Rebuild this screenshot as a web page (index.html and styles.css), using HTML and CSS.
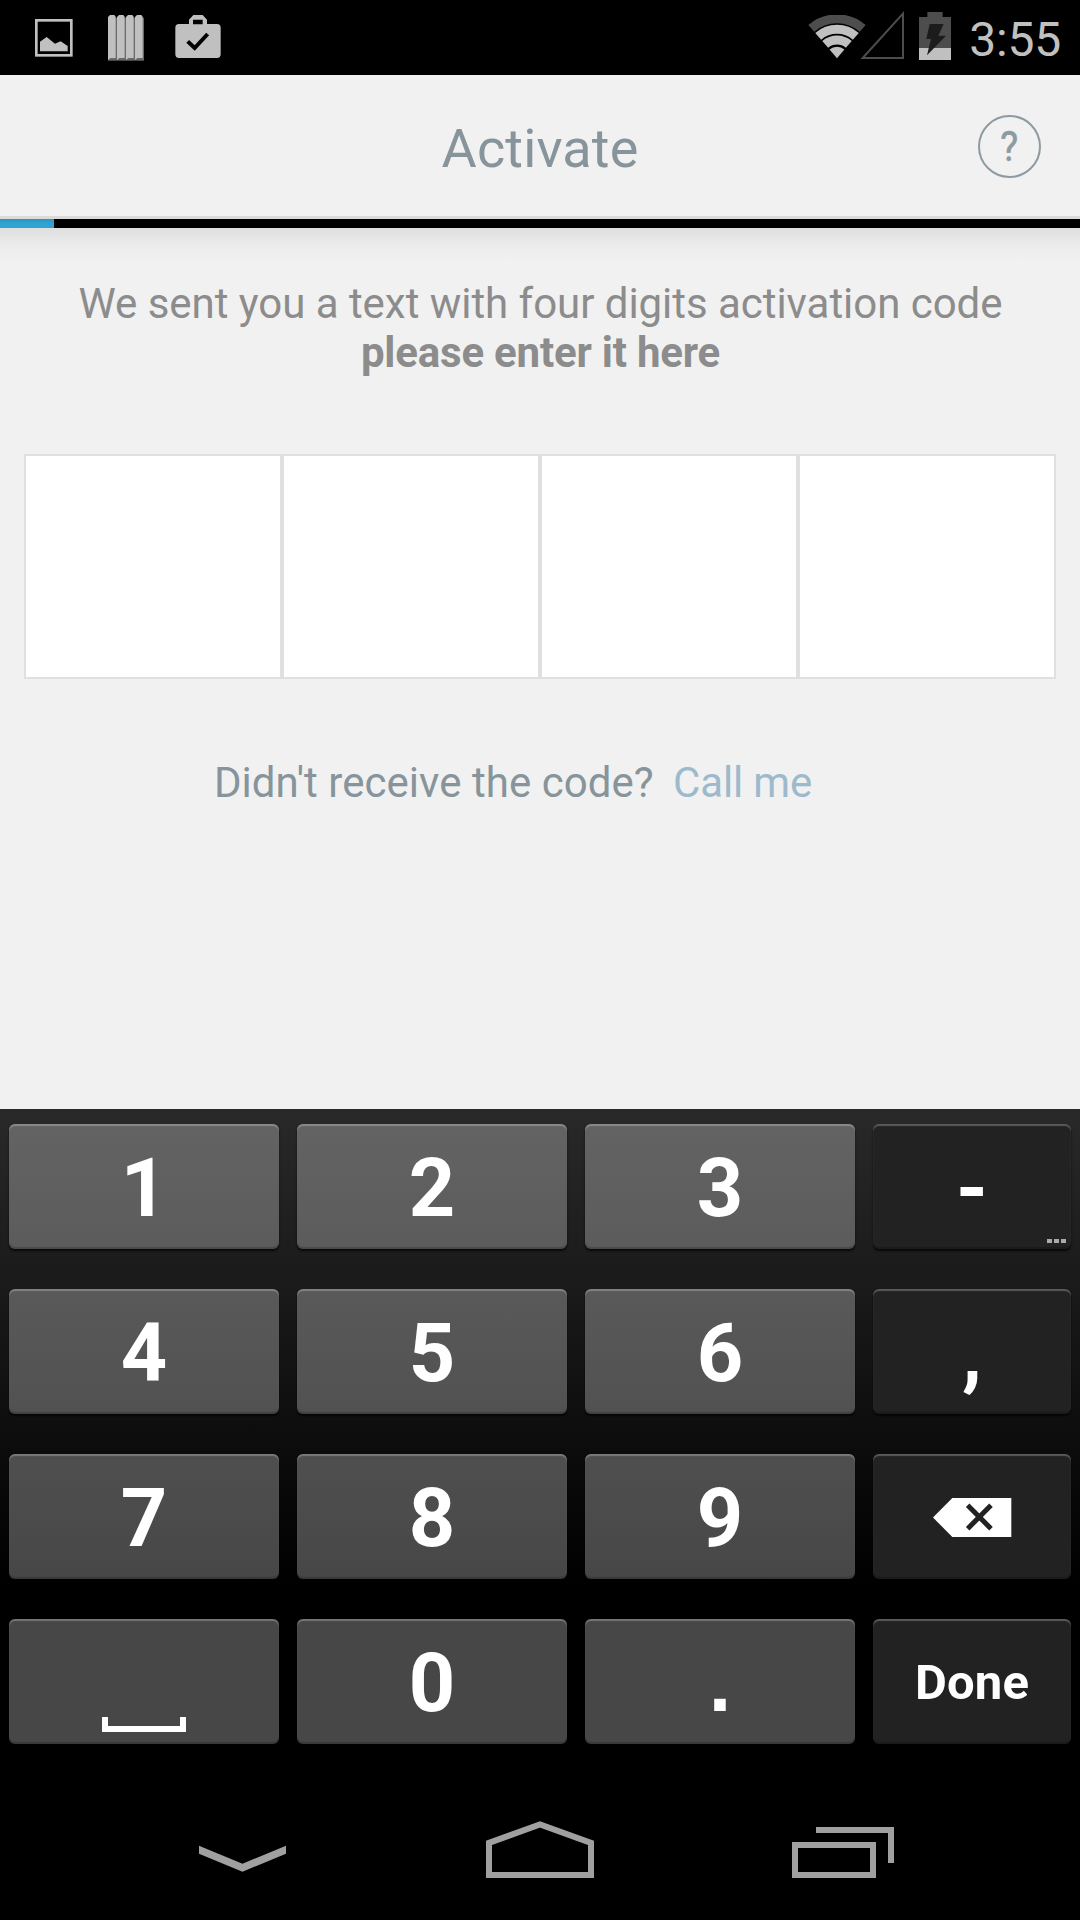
FILE: index.html
```html
<!DOCTYPE html>
<html lang="en">
<head>
<meta charset="utf-8">
<title>Activate</title>
<link rel="stylesheet" href="styles.css">
</head>
<body>
<div class="screen">
  <div class="status-bar">
    <div class="notifications">
      <svg class="icon-image" width="38" height="38" viewBox="0 0 114 114"><rect x="4" y="4" width="105" height="105" fill="none" stroke="#c0c0c0" stroke-width="8"/><path d="M15 68 35 54 60 74 77 67 98 81V97H15Z" fill="#c0c0c0"/></svg>
      <svg class="icon-books" width="36" height="46" viewBox="0 0 108 138">
        <g fill="#6a6a6a"><rect y="8" width="27" height="129"/><rect x="27" y="8" width="27" height="129"/><rect x="54" y="8" width="27" height="129"/><rect x="81" y="8" width="27" height="129"/></g>
        <g fill="#c0c0c0"><path d="M0 6 6 0H19L23 5V129H7L0 135Z"/><path d="M27 6 33 0H46L50 5V129H34L27 135Z"/><path d="M54 6 60 0H73L77 5V129H61L54 135Z"/><path d="M81 6 87 0H100L104 5V129H88L81 135Z"/></g>
      </svg>
      <svg class="icon-bag" width="46" height="43" viewBox="0 0 138 129"><path fill="#c0c0c0" fill-rule="evenodd" d="M12 27H42V14L55 0H83L96 14V27H126Q137 27 137 38V118Q137 129 126 129H12Q1 129 1 118V38Q1 27 12 27ZM54 14V28H83V14Z"/><path d="M38 79 59 99 98 57" fill="none" stroke="#000" stroke-width="12"/></svg>
    </div>
    <div class="system">
      <svg class="icon-wifi" width="58" height="44" viewBox="83 45 174 132"><g fill="none" stroke-width="27"><path stroke="#4d4d4d" d="M92.9 85.3A117.5 117.5 0 0 1 247.1 85.3"/><path stroke="#c0c0c0" d="M113.6 109.1A86 86 0 0 1 226.4 109.1"/><path stroke="#c0c0c0" d="M134.6 133.2A54 54 0 0 1 205.4 133.2"/></g><path fill="#c0c0c0" d="M170 175 147.7 148.3A34 34 0 0 1 192.3 148.3Z"/></svg>
      <svg class="icon-signal" width="44" height="48" viewBox="240 33 132 144"><path d="M248 174H369V41Z" fill="none" stroke="#4d4d4d" stroke-width="6"/></svg>
      <svg class="icon-battery" width="32" height="48" viewBox="417 36 96 144"><path fill="#4d4d4d" d="M417 51H442V36H488V51H513V180H417Z"/><path fill="#c0c0c0" d="M417 144H513V180H417Z"/><path fill="#1c1c1c" d="M449 72H491L475 107H498L441 166 453 117H439Z"/></svg>
      <span class="clock">3:55</span>
    </div>
  </div>

  <header class="header">
    <h1 class="title">Activate</h1>
    <div class="help"><span class="help-mark">?</span></div>
  </header>
  <div class="progress"><div class="progress-fill"></div></div>

  <main class="content">
    <p class="message">We sent you a text with four digits activation code<br><strong>please enter it here</strong></p>
    <div class="code"><div class="digit"></div><div class="digit"></div><div class="digit"></div><div class="digit"></div></div>
    <p class="resend"><span class="question">Didn't receive the code?</span><a class="call">Call me</a></p>
  </main>

  <div class="keyboard">
    <div class="key">1</div><div class="key">2</div><div class="key">3</div>
    <div class="key dark more"><span>-</span><span class="dots"><i></i><i></i><i></i></span></div>
    <div class="key">4</div><div class="key">5</div><div class="key">6</div>
    <div class="key dark">,</div>
    <div class="key">7</div><div class="key">8</div><div class="key">9</div>
    <div class="key dark delete"><svg width="79" height="39" viewBox="0 0 237 117"><path fill="#fff" d="M0 58.500 58 0H235V117H58Z"/><path d="M104 22 174 92M174 22 104 92" stroke="#222" stroke-width="15"/></svg></div>
    <div class="key space"><span class="space-mark"></span></div><div class="key">0</div><div class="key period">.</div>
    <div class="key dark done">Done</div>
  </div>

  <nav class="nav">
    <svg class="nav-back" width="88" height="27" viewBox="0 0 264 81"><path fill="#a0a0a0" d="M0 2 130.500 56 261 2V26L130.500 80 0 26Z"/></svg>
    <svg class="nav-home" width="108" height="57" viewBox="0 0 324 171"><path fill="none" stroke="#a0a0a0" stroke-width="18" d="M9 65.500 162 10 315 65.500V162H9Z"/></svg>
    <svg class="nav-recents" width="102" height="51" viewBox="0 0 102 51"><path fill="none" stroke="#a0a0a0" stroke-width="6" d="M3 18H81V48H3ZM24 3H99V36"/></svg>
  </nav>
</div>
</body>
</html>
```
FILE: styles.css
```css
* { box-sizing: border-box; margin: 0; padding: 0; }
body { font-family: Roboto, sans-serif; background: #000; }
svg { display: block; flex: none; }
.screen { width: 1080px; height: 1920px; display: flex; flex-direction: column; overflow: hidden; background: #f1f1f1; }

.status-bar { height: 75px; flex: none; background: #000; display: flex; justify-content: space-between; }
.notifications, .system { display: flex; align-items: flex-start; }
.notifications { padding-left: 35px; }
.icon-image { margin-top: 19px; }
.icon-books { margin: 15px 0 0 35px; }
.icon-bag { margin: 15px 0 0 31px; }
.system { padding-right: 19px; }
.icon-wifi { margin-top: 15px; }
.icon-signal { margin: 11px 0 0 -6px; }
.icon-battery { margin: 12px 0 0 15px; }
.clock { margin: 11px 0 0 17px; width: 93px; font-size: 48px; line-height: 57px; letter-spacing: -.2px; color: #c0c0c0; text-align: right; white-space: nowrap; }

.header { height: 144px; flex: none; border-bottom: 3px solid #dadada; display: grid; grid-template-columns: 1fr auto 1fr; align-items: center; padding: 0 39px; }
.title { grid-column: 2; font-size: 54px; line-height: 64px; letter-spacing: .15px; font-weight: 400; color: #87949b; padding-top: 7px; }
.help { justify-self: end; width: 63px; height: 63px; margin-top: 2px; border: 2.500px solid #8d9aa1; border-radius: 50%; color: #8d9aa1; font-size: 43px; line-height: 59px; text-align: center; }
.help-mark { display: inline-block; transform: scaleX(.88); -webkit-text-stroke: .6px #8d9aa1; }
.progress { height: 9px; flex: none; background: #000; }
.progress-fill { width: 54px; height: 9px; background: linear-gradient(#2a94bd, #2fa3d1 50%); }

.content { height: 881px; flex: none; padding: 51px 24px 0; background: linear-gradient(#dfdfdf, #e8e8e8 12px, #eeeeee 22px, #f1f1f1 34px); }
.message { padding-left: 1px; font-size: 42px; line-height: 49px; letter-spacing: -.04px; text-align: center; color: #8c8c8c; white-space: nowrap; }
.message strong { letter-spacing: -.2px; }
.code { display: grid; grid-template-columns: repeat(4, 1fr); height: 225px; margin-top: 77px; }
.digit { background: #fff; border: 2px solid #e0e0e0; }
.resend { display: flex; margin-top: 79px; padding-left: 190px; font-size: 42px; line-height: 49px; color: #87949b; white-space: nowrap; }
.question { width: 459px; letter-spacing: .04px; }
.call { color: #9dbacd; letter-spacing: -.15px; }

.keyboard { height: 667px; flex: none; display: grid; grid-template-columns: 270px 270px 270px 198px; grid-auto-rows: 125px; column-gap: 18px; row-gap: 40px; padding: 15px 9px 0; background: linear-gradient(#292929, #000 481px); }
.key { display: flex; align-items: center; justify-content: center; border-radius: 6px; background: rgba(255,255,255,.28); box-shadow: inset 0 2px 1px rgba(255,255,255,.25), inset 0 -2px 1px rgba(0,0,0,.2), 0 2px 2px rgba(0,0,0,.7); color: #fff; font-size: 81px; font-weight: 700; line-height: 95px; padding-top: 3px; }
.dark { background: #222; }
.more { position: relative; }
.dots { position: absolute; right: 5px; bottom: 6px; display: flex; gap: 2px; }
.dots i { width: 5px; height: 4px; background: #aaa; }
.delete { padding-top: 1px; }
.period { font-family: "Liberation Sans", sans-serif; }
.space { align-items: flex-end; padding-bottom: 12px; }
.space-mark { width: 84px; height: 15px; border: 6px solid #fff; border-top: 0; }
.done { font-size: 49px; letter-spacing: .2px; padding-top: 2px; }

.nav { height: 144px; flex: none; background: #000; display: flex; align-items: flex-start; padding-left: 199px; }
.nav-back { margin-top: 69px; }
.nav-home { margin: 45px 0 0 199px; }
.nav-recents { margin: 51px 0 0 198px; }
```
